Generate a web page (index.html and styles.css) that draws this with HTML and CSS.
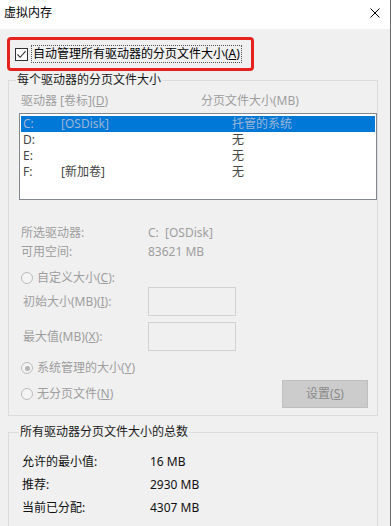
FILE: index.html
```html
<!DOCTYPE html>
<html lang="zh-CN">
<head>
    <meta charset="UTF-8">
    <meta name="viewport" content="width=device-width, initial-scale=1.0">
    <title>虚拟内存</title>
    <link rel="stylesheet" href="styles.css">
</head>
<body>
    <div class="window">
        <!-- Title bar -->
        <div class="titlebar">
            <span class="title">虚拟内存</span>
            <svg class="close" width="10" height="10" viewBox="0 0 10 10">
                <path d="M0.5 0.5 L9.5 9.5 M9.5 0.5 L0.5 9.5" stroke="#000" stroke-width="1" fill="none"/>
            </svg>
        </div>

        <div class="content">
            <!-- Auto manage checkbox (highlighted) -->
            <div class="auto-box">
                <span class="checkbox">
                    <svg width="11" height="11" viewBox="0 0 11 11">
                        <path d="M1.5 5.5 L4.2 8.3 L9.6 2.2" stroke="#333" stroke-width="1.1" fill="none"/>
                    </svg>
                </span>
                <span class="focus-label">自动管理所有驱动器的分页文件大小(<u>A</u>)</span>
            </div>

            <!-- Per-drive group -->
            <fieldset class="group group-drives">
                <legend>每个驱动器的分页文件大小</legend>

                <div class="drive-header disabled">
                    <span>驱动器 [卷标](<u>D</u>)</span>
                    <span>分页文件大小(MB)</span>
                </div>

                <div class="listbox">
                    <div class="drive-row selected"><span>C:</span><span>[OSDisk]</span><span>托管的系统</span></div>
                    <div class="drive-row"><span>D:</span><span></span><span>无</span></div>
                    <div class="drive-row"><span>E:</span><span></span><span>无</span></div>
                    <div class="drive-row"><span>F:</span><span>[新加卷]</span><span>无</span></div>
                </div>

                <div class="info-grid disabled">
                    <span>所选驱动器:</span><span>C:&nbsp;&nbsp;[OSDisk]</span>
                    <span>可用空间:</span><span>83621 MB</span>
                </div>

                <div class="radio-row radio-custom disabled">
                    <span class="radio"></span>
                    <span>自定义大小(<u>C</u>):</span>
                </div>

                <div class="size-field field-initial disabled">
                    <span>初始大小(MB)(<u>I</u>):</span>
                    <span class="textbox"></span>
                </div>
                <div class="size-field field-max disabled">
                    <span>最大值(MB)(<u>X</u>):</span>
                    <span class="textbox"></span>
                </div>

                <div class="radio-row radio-system disabled">
                    <span class="radio checked"></span>
                    <span>系统管理的大小(<u>Y</u>)</span>
                </div>

                <div class="last-row">
                    <div class="radio-row disabled">
                        <span class="radio"></span>
                        <span>无分页文件(<u>N</u>)</span>
                    </div>
                    <button class="set-btn" disabled>设置(<u>S</u>)</button>
                </div>
            </fieldset>

            <!-- Totals group -->
            <fieldset class="group group-total">
                <legend>所有驱动器分页文件大小的总数</legend>
                <div class="total-grid">
                    <span>允许的最小值:</span><span>16 MB</span>
                    <span>推荐:</span><span>2930 MB</span>
                    <span>当前已分配:</span><span>4307 MB</span>
                </div>
            </fieldset>
        </div>
    </div>
</body>
</html>
```

FILE: styles.css
```css
/* Page */
body {
    margin: 0;
    padding: 0;
    font-family: "Noto Sans", "Noto Sans CJK SC", sans-serif;
    font-size: 12px;
    line-height: 16px;
    color: #1a1a1a;
    background-color: #f0f0f0;
}

u {
    text-decoration: underline;
    text-underline-offset: 1px;
}

.window {
    width: 391px;
    height: 526px;
    box-sizing: border-box;
    border-right: 1px solid #6a6a6a;
    overflow: hidden;
}

/* Title bar */
.titlebar {
    height: 29px;
    background: #fff;
    display: flex;
    justify-content: space-between;
    align-items: flex-start;
    padding: 5px 10px 0 4px;
    box-sizing: border-box;
}

.title {
    color: #000;
}

.close {
    margin-top: 3px;
}

.content {
    padding-top: 8px;
}

/* Highlighted checkbox */
.auto-box {
    width: 247px;
    height: 34px;
    margin-left: 7px;
    box-sizing: border-box;
    border: 3px solid #e5221e;
    border-radius: 4px;
    display: flex;
    align-items: center;
    padding-left: 5px;
    gap: 3px;
}

.checkbox {
    width: 13px;
    height: 13px;
    box-sizing: border-box;
    border: 1px solid #333;
    background: #fff;
    display: flex;
    align-items: center;
    justify-content: center;
}

.focus-label {
    border: 1px dotted #555;
    padding: 0 1px;
    color: #000;
}

/* Group boxes */
.group {
    margin: 0 0 0 8px;
    width: 370px;
    box-sizing: border-box;
    border: 1px solid #dcdcdc;
    padding: 5px 0 7px 10px;
    min-width: 0;
}

.group legend {
    padding: 0 1px;
    margin-left: -3px;
    color: #1a1a1a;
}

.group-drives {
    margin-top: 1px;
}

.group-total {
    margin-top: 8px;
    padding-top: 14px;
    padding-left: 13px;
    height: 120px;
}

.disabled {
    color: #9e9e9e;
}

.drive-header {
    display: grid;
    grid-template-columns: 180px 1fr;
    padding-left: 2px;
}

/* Drive list */
.listbox {
    margin-top: 4px;
    width: 358px;
    height: 87px;
    box-sizing: border-box;
    border: 1px solid #828790;
    background: #fff;
    padding: 2px 1px 0;
}

.drive-row {
    display: grid;
    grid-template-columns: 38px 171px 1fr;
    height: 16px;
    padding-left: 2px;
    color: #454545;
}

.drive-row.selected {
    background: #0078d7;
    color: #9db5d6;
}

.info-grid {
    margin-top: 25px;
    display: grid;
    grid-template-columns: 127px 1fr;
    row-gap: 3px;
    padding-left: 2px;
}

/* Radio buttons */
.radio-row {
    display: flex;
    align-items: center;
    gap: 4px;
    padding-left: 2px;
    height: 16px;
}

.radio {
    width: 12px;
    height: 12px;
    box-sizing: border-box;
    border: 1px solid #bcbcbc;
    border-radius: 50%;
    background: #f4f4f4;
    display: flex;
    align-items: center;
    justify-content: center;
}

.radio.checked::after {
    content: "";
    width: 5px;
    height: 5px;
    border-radius: 50%;
    background: #b4b4b4;
}

.radio-custom {
    margin-top: 10px;
}

.radio-system {
    margin-top: 9px;
}

.size-field {
    display: grid;
    grid-template-columns: 125px 88px;
    align-items: center;
    height: 29px;
    padding-left: 4px;
}

.field-initial {
    margin-top: 1px;
}

.field-max {
    margin-top: 6px;
}

.textbox {
    height: 29px;
    box-sizing: border-box;
    border: 1px solid #d2d2d2;
    background: #f0f0f0;
}

.last-row {
    margin-top: 4px;
    display: flex;
    justify-content: space-between;
    align-items: center;
    padding-right: 9px;
}

.set-btn {
    width: 86px;
    height: 28px;
    font: inherit;
    color: #8a8a8a;
    background: #cccccc;
    border: 1px solid #bfbfbf;
    padding: 0;
}

/* Totals */
.total-grid {
    display: grid;
    grid-template-columns: 128px 1fr;
    row-gap: 7px;
    color: #111;
}
```
